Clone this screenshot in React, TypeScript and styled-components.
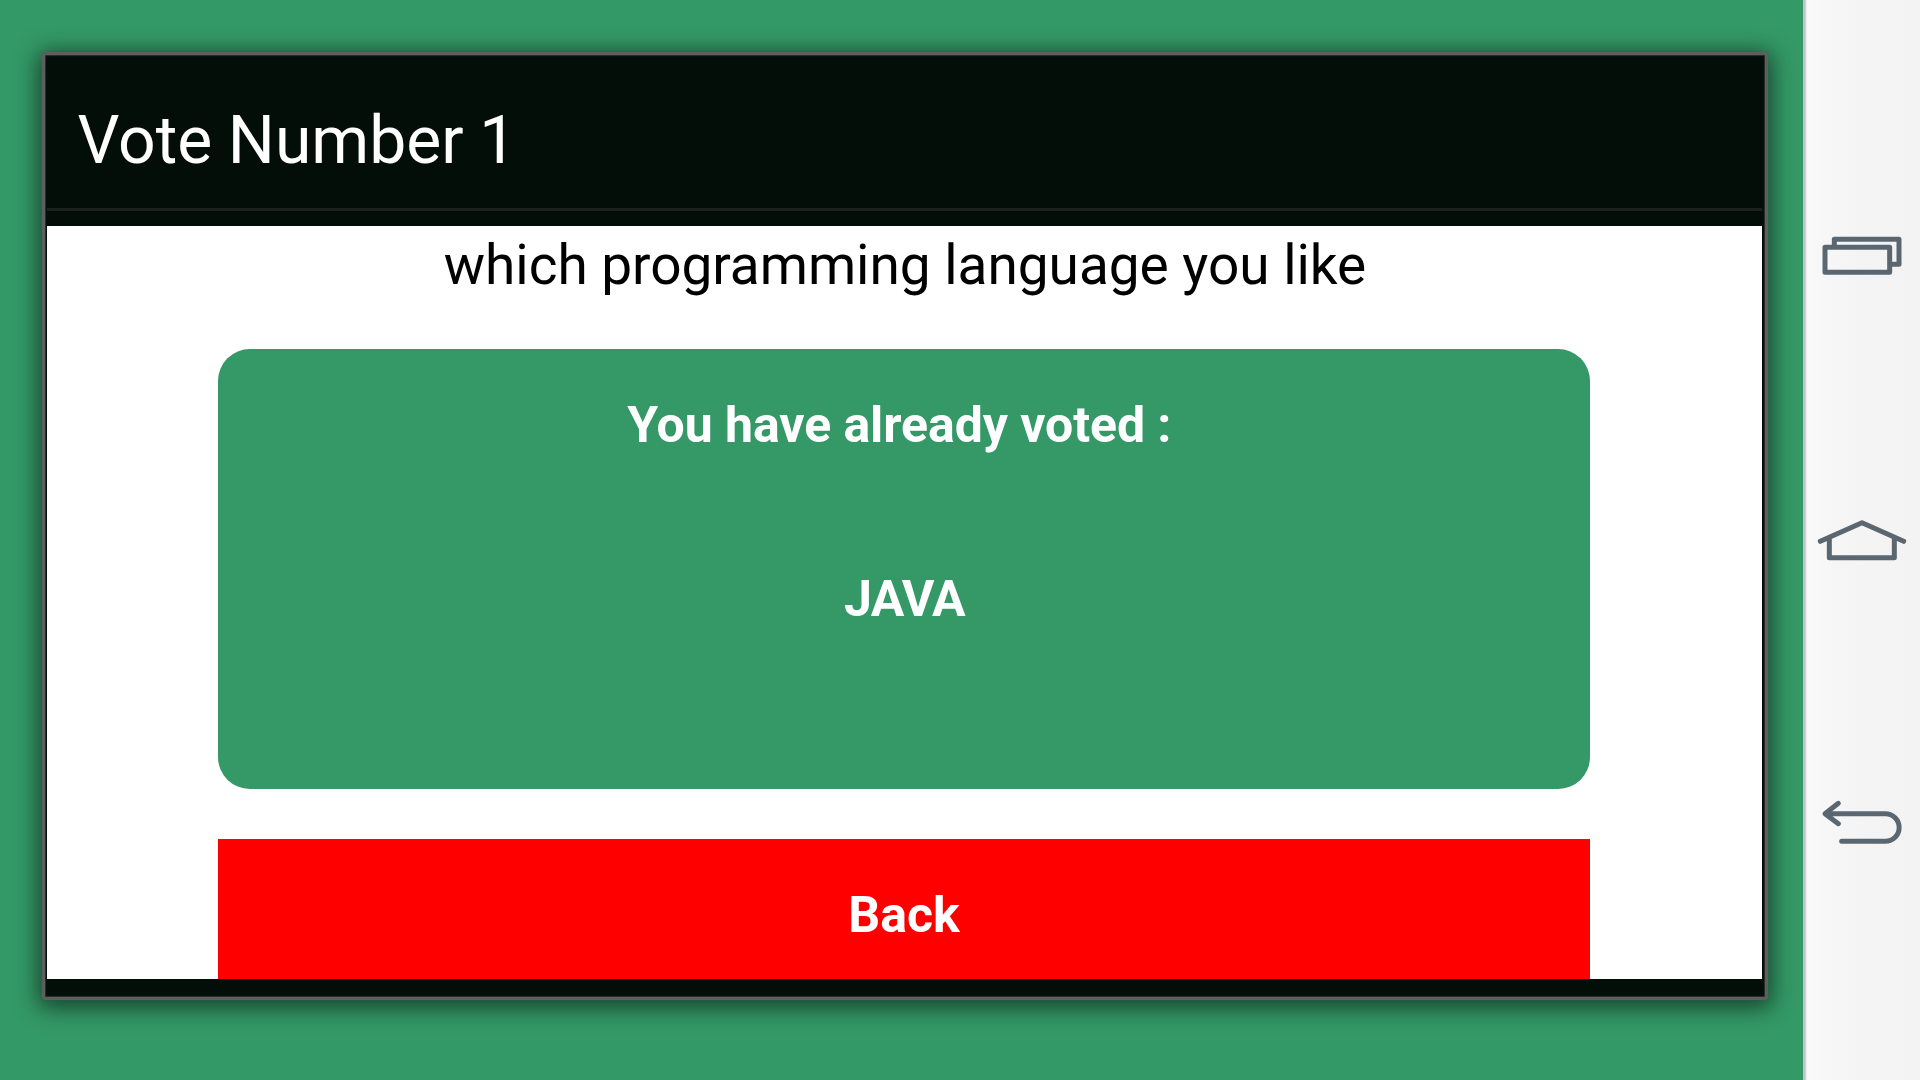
import React from "react";
import styled, { createGlobalStyle } from "styled-components";

const GlobalStyle = createGlobalStyle`
  * { box-sizing: border-box; }
  body { margin: 0; background: #339966; font-family: Roboto, "Liberation Sans", sans-serif; }
`;

const Screen = styled.div`
  display: flex;
  width: 1920px;
  height: 1080px;
  overflow: hidden;
`;

const Backdrop = styled.main`
  flex: 1;
  padding: 52px 35px 80px 42px;
  background: #339966;
`;

const Dialog = styled.section`
  display: flex;
  flex-direction: column;
  height: 948px;
  border: 3px solid #5e5e5e;
  border-radius: 4px;
  padding: 0 3px 18px 2px;
  background: #040e09;
  box-shadow: inset 0 0 1px 1px #2c322f, 0 0 1px 0 #565e5a, 0 4px 22px 4px rgba(0, 0, 0, 0.55);
`;

const TitleBar = styled.header`
  display: flex;
  align-items: center;
  height: 156px;
  padding: 19px 0 0 30.5px;
  border-bottom: 3px solid #1a231f;
  margin-bottom: 15px;
`;

const Title = styled.h1`
  margin: 0;
  color: #fff;
  font-size: 66px;
  line-height: 78px;
  font-weight: 400;
  word-spacing: -0.8px;
`;

const Content = styled.div`
  display: flex;
  flex-direction: column;
  align-items: center;
  flex: 1;
  padding: 0 172px 0 171px;
  overflow: hidden;
  background: #fff;
`;

const Question = styled.p`
  margin: 0;
  height: 123px;
  padding: 6px 0 0 2px;
  color: #000;
  font-size: 55px;
  line-height: 66px;
  letter-spacing: -0.04px;
  white-space: nowrap;
`;

const VoteCard = styled.div`
  display: flex;
  flex-direction: column;
  align-items: center;
  width: 100%;
  height: 440px;
  flex-shrink: 0;
  border-radius: 32px;
  padding-top: 46px;
  gap: 114px;
  background: #349967;
`;

const Label = styled.span<{ $spacing?: number; $shift?: number }>`
  color: #fff;
  font-size: 50px;
  line-height: 60px;
  font-weight: 700;
  white-space: pre;
  letter-spacing: ${(p) => p.$spacing ?? 0}px;
  margin-left: ${(p) => p.$shift ?? 0}px;
`;

const BackButton = styled.button`
  display: flex;
  justify-content: center;
  align-items: flex-start;
  width: 100%;
  height: 140px;
  flex-shrink: 0;
  margin-top: 50px;
  padding: 46px 0 0;
  border: 0;
  background: #ff0000;
  font-family: inherit;
`;

const NavBar = styled.nav`
  display: flex;
  flex-direction: column;
  width: 117px;
  padding-top: 200px;
  background: linear-gradient(90deg, #bfc3c6 0, #c2c6c9 2px, #dfe0e1 3px, #f9f9f9 4px, #f7f7f7 20px, #f4f4f4 60px, #f3f3f3 100%);
`;

const NavIcon = styled.svg<{ $gap?: number }>`
  width: 117px;
  height: 110px;
  margin-bottom: ${(p) => p.$gap ?? 0}px;
  fill: none;
  stroke: #5b6770;
  stroke-width: 15;
  stroke-linecap: round;
  stroke-linejoin: round;
`;

export default function App() {
  return (
    <Screen>
      <GlobalStyle />
      <Backdrop>
        <Dialog>
          <TitleBar>
            <Title>Vote Number 1</Title>
          </TitleBar>
          <Content>
            <Question>which programming language you like</Question>
            <VoteCard>
              <Label $spacing={-0.08} $shift={3}>You have already voted : </Label>
              <Label $spacing={-0.6} $shift={1}>JAVA</Label>
            </VoteCard>
            <BackButton>
              <Label>Back</Label>
            </BackButton>
          </Content>
        </Dialog>
      </Backdrop>
      <NavBar>
        <NavIcon viewBox="39 0 351 330" $gap={180}>
          <path d="M133 136V118H327V193H306" strokeLinecap="butt" />
          <rect x="105" y="142" width="194" height="75" />
        </NavIcon>
        <NavIcon viewBox="39 0 351 330" $gap={170}>
          <path d="M91 154L216 98L341 154M118 145V203H313V145" />
        </NavIcon>
        <NavIcon viewBox="39 0 351 330">
          <path d="M145 100L105 131L145 161M107 131H286A41.5 41.5 0 0 1 286 214H155" />
        </NavIcon>
      </NavBar>
    </Screen>
  );
}
